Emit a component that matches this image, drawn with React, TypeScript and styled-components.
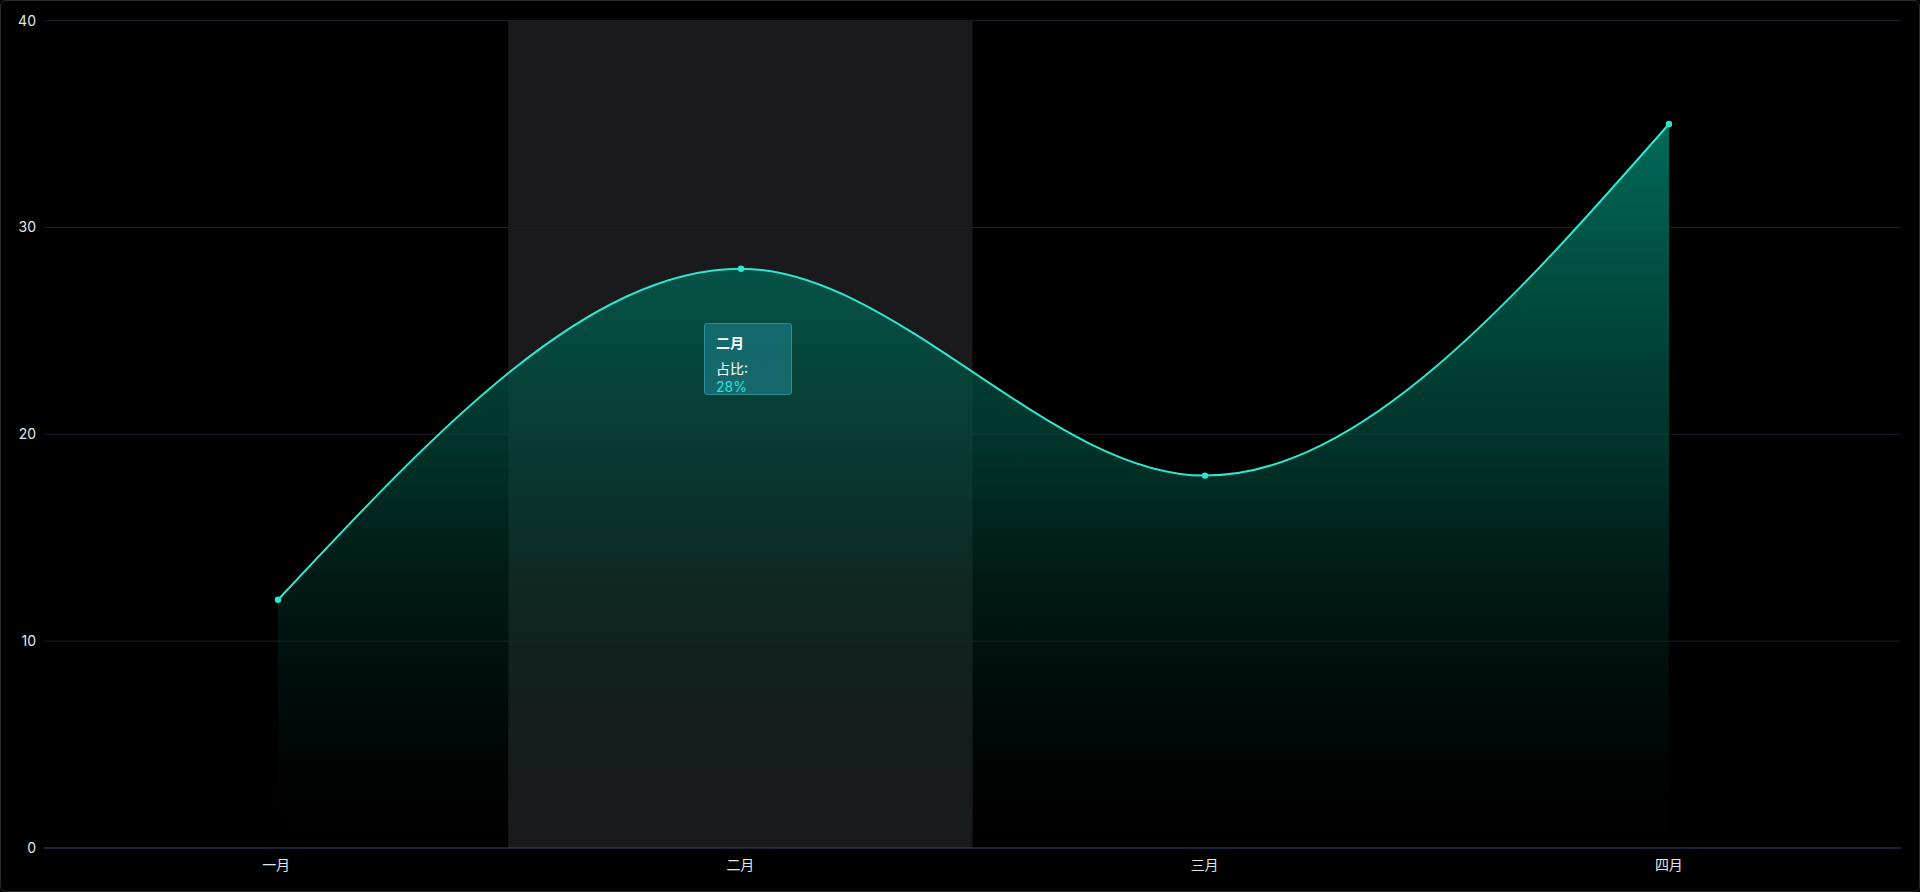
import React from "react";
import styled, { createGlobalStyle } from "styled-components";

const GlobalStyle = createGlobalStyle`
  html, body { margin: 0; padding: 0; background: #000; }
  body { font-family: Inter, "Noto Sans CJK SC", sans-serif; }
`;

const Frame = styled.div`
  position: relative;
  width: 1920px;
  height: 892px;
  box-sizing: border-box;
  border: 1px solid #2c2c2e;
  border-radius: 6px;
  background: #000;
  overflow: hidden;
`;

const Chart = styled.svg`
  display: block;
  width: 100%;
  height: 100%;
`;

const Tooltip = styled.div`
  position: absolute;
  left: 703px;
  top: 322px;
  width: 88px;
  height: 72px;
  box-sizing: border-box;
  padding: 10px 11px;
  background: rgba(24, 110, 116, 0.85);
  border: 1px solid #2b8d98;
  border-radius: 3px;
  color: #fff;
  font-size: 14px;
  font-family: Inter, "Noto Sans CJK SC", sans-serif;
`;

const TipTitle = styled.div`
  font-weight: 700;
  line-height: 18px;
  margin-bottom: 8px;
`;

const TipRow = styled.div`
  line-height: 18px;
`;

const TipValue = styled.span`
  color: #22e4ea;
`;

const left = 43;
const right = 1900;
const zeroY = 847;
const perUnit = (847 - 19.6) / 40;
const yTicks = [0, 10, 20, 30, 40];
const cats = ["一月", "二月", "三月", "四月"];
const band = (right - left) / 4;
const cx = (i: number) => left + band * (i + 0.5);

const line =
  "M277,598.8 C431.7,433.3 585.3,267.7 740,267.7 C894.7,267.7 1049.3,474.6 1204,474.6 C1358.7,474.6 1513.3,298.9 1668,123";
const points = [
  [277, 598.8],
  [740, 267.7],
  [1204, 474.6],
  [1668, 123],
];

export default function App() {
  return (
    <>
      <GlobalStyle />
      <Frame>
        <Chart viewBox="0 0 1918 890">
          <defs>
            <linearGradient id="area" x1="0" y1="0" x2="0" y2="1" gradientUnits="userSpaceOnUse">
              <stop offset="0" stopColor="#00a083" stopOpacity="0.62" />
              <stop offset="0.14" stopColor="#00a083" stopOpacity="0.62" />
              <stop offset="0.95" stopColor="#00a083" stopOpacity="0" />
            </linearGradient>
            <linearGradient id="areaUser" x1="0" y1="123" x2="0" y2="847" gradientUnits="userSpaceOnUse">
              <stop offset="0" stopColor="#00705e" stopOpacity="0.95" />
              <stop offset="0.45" stopColor="#00483a" stopOpacity="0.7" />
              <stop offset="1" stopColor="#001a16" stopOpacity="0" />
            </linearGradient>
          </defs>
          <rect x={left + band} y={19.6} width={band} height={zeroY - 19.6} fill="#1a1a1c" />
          {yTicks.map((t) => {
            const y = zeroY - t * perUnit;
            return (
              <g key={t}>
                {t > 0 && <line x1={left} x2={right} y1={y} y2={y} stroke="#1c1f2a" strokeWidth="1" />}
                <text x={35} y={y + 5} fill="#e4e6ee" fontSize="14" textAnchor="end">
                  {t}
                </text>
              </g>
            );
          })}
          <path d={`${line} L1668,${zeroY} L277,${zeroY} Z`} fill="url(#areaUser)" />
          <path d={line} fill="none" stroke="#2fe6cf" strokeWidth="2" />
          {points.map(([x, y]) => (
            <circle key={x} cx={x} cy={y} r="3.2" fill="#2fe6cf" />
          ))}
          <line x1={left} x2={right} y1={zeroY} y2={zeroY} stroke="#34447a" strokeWidth="1" />
          {cats.map((c, i) => (
            <text key={c} x={cx(i)} y={869} fill="#e4e6ee" fontSize="14" textAnchor="middle">
              {c}
            </text>
          ))}
        </Chart>
        <Tooltip>
          <TipTitle>二月</TipTitle>
          <TipRow>
            占比: <TipValue>28%</TipValue>
          </TipRow>
        </Tooltip>
      </Frame>
    </>
  );
}
